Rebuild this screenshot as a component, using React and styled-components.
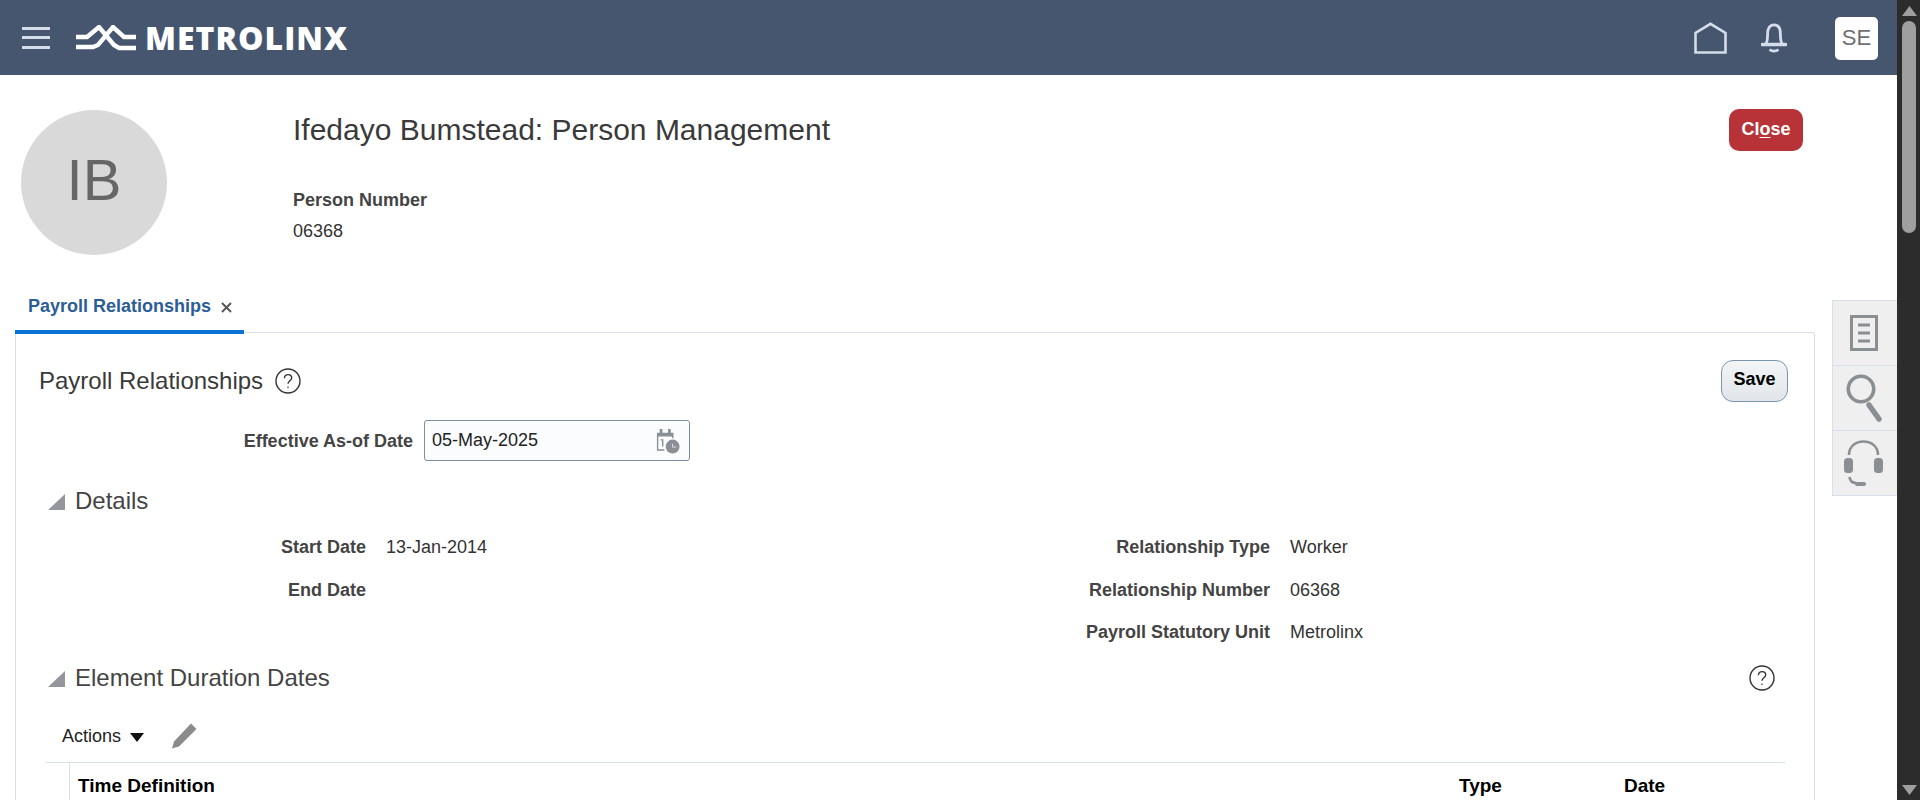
import React from "react";
import styled, { createGlobalStyle } from "styled-components";

const Global = createGlobalStyle`
  html, body { margin: 0; padding: 0; height: 800px; overflow: hidden; background: #fff; }
  body { font-family: "Liberation Sans", Arial, sans-serif; color: #333; }
  * { box-sizing: border-box; }
`;
const Shell = styled.div`display: flex; width: 1920px; height: 800px; overflow: hidden;`;
const Page = styled.div`width: 1897px; height: 800px; overflow: hidden; display: flex; flex-direction: column;`;
const Scrollbar = styled.div`
  width: 23px; height: 800px; background: #2c2c2c; display: flex; flex-direction: column; align-items: center;
  padding: 6px 0 5px 1px; justify-content: space-between;
`;
const Thumb = styled.div`width: 14px; height: 212px; margin-top: 5px; border-radius: 7px; background: #9f9f9f;`;
const ScrollTop = styled.div`display: flex; flex-direction: column; align-items: center;`;
const Header = styled.header`
  height: 75px; flex: none; background: #46566f; display: flex; align-items: center; padding: 0 19px 0 22px;
`;
const Burger = styled.div`
  width: 28px; height: 22px; display: flex; flex-direction: column; justify-content: space-between; margin-right: 26px;
  & > i { display: block; height: 3px; background: #d4dde9; }
`;
const Wordmark = styled.span`
  font-family: "Open Sans", sans-serif; font-weight: 800; font-size: 32px; letter-spacing: 1px; color: #fff; line-height: 1; margin-left: 9px;
`;
const HeaderRight = styled.div`margin-left: auto; display: flex; align-items: center;`;
const HeaderIcon = styled.svg`display: block; color: #d4dde9; fill: none; stroke: currentColor; margin-right: ${p => p.$mr}px;`;
const UserBadge = styled.div`
  width: 43px; height: 43px; background: #fff; border-radius: 5px; color: #6f6f6f; font-size: 22px; display: flex; align-items: center; justify-content: center; margin-top: 1px;
`;
const Identity = styled.section`height: 208px; flex: none; display: flex; padding: 35px 94px 0 21px;`;
const Avatar = styled.div`
  width: 146px; height: 145px; border-radius: 50%; background: #d9d9d9; color: #666; font-size: 58px; padding-bottom: 6px; display: flex; align-items: center; justify-content: center; flex: none;
`;
const IdentityBody = styled.div`margin-left: 126px; flex: 1;`;
const PageTitle = styled.h1`margin: 0; font-weight: 400; font-size: 30px; line-height: 40px; color: #3a3a3a;`;
const PersonLabel = styled.div`font-weight: 700; font-size: 18px; color: #444; margin-top: 40px; line-height: 20px;`;
const PersonValue = styled.div`font-size: 18px; margin-top: 11px; line-height: 20px; color: #333;`;
const CloseButton = styled.button`
  width: 74px; height: 42px; border: 0; border-radius: 10px; background: #b83338; color: #fff; font: 700 18px "Liberation Sans", sans-serif; margin-top: -1px; padding: 0 0 2px;
  & u { text-underline-offset: 2px; }
`;
const Body = styled.div`flex: 1; display: flex; align-items: flex-start; padding-left: 15px; min-height: 0;`;
const Main = styled.div`width: 1800px; flex: none;`;
const Tabs = styled.div`display: flex; height: 51px;`;
const Tab = styled.div`
  width: 229px; height: 51px; padding-left: 13px; display: flex; align-items: flex-start; padding-top: 13px; color: #2b5e97; font-weight: 700; font-size: 18px; line-height: 20px; border-bottom: 4px solid #0972d3; position: relative; z-index: 1;
`;
const TabClose = styled.svg`margin: 6px 0 0 10px; stroke: #555; stroke-width: 1.9; fill: none;`;
const Card = styled.div`
  margin-top: -2px; height: 480px; border: 1px solid #d6dfea; border-bottom: 0; border-radius: 0 3px 0 0; padding: 26px 26px 0 23px;
`;
const TitleRow = styled.div`display: flex; align-items: center; height: 44px;`;
const CardTitle = styled.h2`margin: 0; font-weight: 400; font-size: 24px; color: #3a3a3a;`;
const Help = styled.svg`display: block; fill: none; stroke: #333; margin-left: ${p => p.$ml || 0}px;`;
const SaveButton = styled.button`
  margin-left: auto; width: 67px; height: 42px; border: 1px solid #7a95ac; border-radius: 12px; background: linear-gradient(#f3f5f7, #e1e5e9); color: #000; font: 700 18px "Liberation Sans", sans-serif; padding: 0 0 3px;
`;
const DateRow = styled.div`display: flex; align-items: center; margin-top: 17px; height: 41px;`;
const FieldLabel = styled.label`font-weight: 700; font-size: 18px; color: #444; text-align: right; width: ${p => p.$w}px; flex: none; line-height: 20px;`;
const DateInput = styled.div`
  margin-left: 11px; width: 266px; height: 41px; border: 1px solid #7b8f9f; border-radius: 3px; background: #fbfcfe; display: flex; align-items: center; justify-content: space-between; padding: 0 9px 0 7px; font-size: 18px; color: #222;
`;
const SectionHead = styled.div`display: flex; align-items: center; height: 30px; margin-top: ${p => p.$mt}px; padding-left: 9px; padding-right: 13px;`;
const Disclosure = styled.i`
  display: block; width: 0; height: 0; border-style: solid; border-width: 0 0 16px 17px; border-color: transparent transparent #93979b transparent; margin-right: 10px; margin-top: 1px;
`;
const SectionTitle = styled.h3`margin: 0; font-weight: 400; font-size: 24px; color: #444;`;
const Spacer = styled.div`flex: 1;`;
const DetailGrid = styled.div`display: flex; margin-top: 10px; height: 128px;`;
const DetailCol = styled.div`display: grid; grid-template-columns: ${p => p.$w}px auto; column-gap: 20px; grid-auto-rows: 42.5px; align-content: start; align-items: center; width: ${p => p.$width}px; flex: none;`;
const DetailValue = styled.div`font-size: 18px; color: #333; line-height: 20px;`;
const Toolbar = styled.div`display: flex; align-items: center; height: 48px; margin-top: 19px; padding-left: 23px;`;
const ActionsLabel = styled.span`font-size: 18px; color: #222;`;
const Caret = styled.i`display: block; width: 0; height: 0; border-style: solid; border-width: 9px 7.5px 0; border-color: #111 transparent transparent; margin: 3px 0 0 9px;`;
const Pencil = styled.svg`display: block; fill: #8b8b8b; margin-left: 27px;`;
const TableHead = styled.div`
  margin-left: 7px; margin-right: 3px; border-top: 1px solid #d6dfea; display: grid; grid-template-columns: 24px 1389px 165px auto; height: 40px; font-weight: 700; font-size: 19px; color: #000; margin-top: 2px; align-items: start;
`;
const Gutter = styled.div`height: 40px; border-right: 1px solid #d6dfea;`;
const HeadCell = styled.div`padding: 12px 0 0 ${p => p.$pl}px; line-height: 22px;`;
const Rail = styled.aside`margin: 17px 0 0 17px; width: 65px; flex: none;`;
const RailTab = styled.div`
  height: 66px; background: #efefef; border: 1px solid #d6dfea; border-right: 0; margin-top: ${p => p.$first ? 0 : -1}px; display: flex; align-items: center; justify-content: center; padding-right: 3px;
`;
const RailSvg = styled.svg`display: block;`;

const HelpIcon = ({ size = 26, ml }) => (
  <Help $ml={ml} width={size} height={size} viewBox="0 0 26 26" strokeWidth="1.4">
    <circle cx="13" cy="13" r="12" />
    <path d="M9.4 10.2c0-2.2 1.6-3.6 3.7-3.6s3.6 1.3 3.6 3.2c0 2.9-3.7 2.9-3.7 6" />
    <circle cx="13" cy="19.2" r=".8" fill="#333" stroke="none" />
  </Help>
);

export default function App() {
  return (
    <Shell>
      <Global />
      <Page>
        <Header>
          <Burger><i /><i /><i /></Burger>
          <svg width="60" height="26" viewBox="0 0 60 26" fill="none" stroke="#fff" strokeWidth="4.4">
            <path d="M0 12h11L23 2l15 18 5 3h17" />
            <path d="M0 22h17l5-2L37 2l11 10h12" />
          </svg>
          <Wordmark>METROLINX</Wordmark>
          <HeaderRight>
            <HeaderIcon $mr={34} width="33" height="32" viewBox="0 0 33 32" strokeWidth="2.6">
              <path d="M1.500 30.500V11L16.500 1.800 31.500 11v19.500z" />
            </HeaderIcon>
            <HeaderIcon $mr={48} width="26" height="30" viewBox="0 0 26 30" strokeWidth="2.8">
              <path d="M5 21c1.500-3 1.600-6 1.600-10C6.600 5 9 1.800 13 1.800S19.400 5 19.400 11c0 4 .1 7 1.600 10" />
              <path d="M1.500 21.500h23" strokeWidth="3.600" strokeLinecap="round" />
              <path d="M8.500 26.500c2.500 2.200 6.500 2.200 9 0" strokeWidth="2.600" />
            </HeaderIcon>
            <UserBadge>SE</UserBadge>
          </HeaderRight>
        </Header>
        <Identity>
          <Avatar>IB</Avatar>
          <IdentityBody>
            <PageTitle>Ifedayo Bumstead: Person Management</PageTitle>
            <PersonLabel>Person Number</PersonLabel>
            <PersonValue>06368</PersonValue>
          </IdentityBody>
          <CloseButton>Cl<u>o</u>se</CloseButton>
        </Identity>
        <Body>
          <Main>
            <Tabs>
              <Tab>
                Payroll Relationships
                <TabClose width="11" height="11" viewBox="0 0 11 11"><path d="M1 1l9 9M10 1l-9 9" /></TabClose>
              </Tab>
            </Tabs>
            <Card>
              <TitleRow>
                <CardTitle>Payroll Relationships</CardTitle>
                <HelpIcon ml={12} />
                <SaveButton>Save</SaveButton>
              </TitleRow>
              <DateRow>
                <FieldLabel $w={374}>Effective As-of Date</FieldLabel>
                <DateInput>
                  05-May-2025
                  <svg width="24" height="26" viewBox="0 0 26 28" fill="#8a8f94">
                    <path d="M1 5h3V1h3v4h6V1h3v4h3v6h-1.500V9H2.500v14H9v1.500H1z" />
                    <path d="M5 12h3v8H6.500v-6.500H5z" />
                    <circle cx="18" cy="20" r="7.500" />
                    <path d="M18 17v3.500h4" stroke="#d8dbde" strokeWidth="1.200" fill="none" />
                  </svg>
                </DateInput>
              </DateRow>
              <SectionHead $mt={25}>
                <Disclosure />
                <SectionTitle>Details</SectionTitle>
              </SectionHead>
              <DetailGrid>
                <DetailCol $w={327} $width={911}>
                  <FieldLabel $w={327}>Start Date</FieldLabel><DetailValue>13-Jan-2014</DetailValue>
                  <FieldLabel $w={327}>End Date</FieldLabel><DetailValue />
                </DetailCol>
                <DetailCol $w={320} $width={600}>
                  <FieldLabel $w={320}>Relationship Type</FieldLabel><DetailValue>Worker</DetailValue>
                  <FieldLabel $w={320}>Relationship Number</FieldLabel><DetailValue>06368</DetailValue>
                  <FieldLabel $w={320}>Payroll Statutory Unit</FieldLabel><DetailValue>Metrolinx</DetailValue>
                </DetailCol>
              </DetailGrid>
              <SectionHead $mt={9}>
                <Disclosure />
                <SectionTitle>Element Duration Dates</SectionTitle>
                <Spacer />
                <HelpIcon />
              </SectionHead>
              <Toolbar>
                <ActionsLabel>Actions</ActionsLabel>
                <Caret />
                <Pencil width="26" height="26" viewBox="0 0 26 26">
                  <path d="M20 .5l5.500 5.500L8 23.500l-7 2 2-7z" />
                </Pencil>
              </Toolbar>
              <TableHead>
                <Gutter />
                <HeadCell $pl={8}>Time Definition</HeadCell>
                <HeadCell $pl={0}>Type</HeadCell>
                <HeadCell $pl={0}>Date</HeadCell>
              </TableHead>
            </Card>
          </Main>
          <Rail>
            <RailTab $first>
              <RailSvg width="28" height="36" viewBox="0 0 28 36" fill="none" stroke="#8a8f94" strokeWidth="3">
                <rect x="1.500" y="1.500" width="25" height="33" />
                <path d="M8 10h12M8 18h12M8 26h12" />
              </RailSvg>
            </RailTab>
            <RailTab>
              <RailSvg width="36" height="48" viewBox="0 0 36 48" fill="none" stroke="#8a8f94">
                <circle cx="15" cy="15" r="12.700" strokeWidth="3.600" />
                <path d="M23 31l10 14" strokeWidth="5.500" strokeLinecap="round" />
              </RailSvg>
            </RailTab>
            <RailTab>
              <RailSvg width="40" height="47" viewBox="0 0 40 47" fill="none" stroke="#8a8f94">
                <path d="M5 15C5 6 12 1.500 19.500 1.500S34 6 34 15" strokeWidth="2.600" />
                <rect x="0" y="18" width="9" height="15" rx="3.500" fill="#8a8f94" stroke="none" />
                <rect x="30" y="18" width="9" height="15" rx="3.500" fill="#8a8f94" stroke="none" />
                <path d="M5.500 37c.5 4 3 6 7 6" strokeWidth="2.600" />
                <rect x="11" y="42" width="11" height="4" rx="2" fill="#8a8f94" stroke="none" />
              </RailSvg>
            </RailTab>
          </Rail>
        </Body>
      </Page>
      <Scrollbar>
        <ScrollTop>
          <svg width="15" height="10" viewBox="0 0 15 10"><path d="M7.500 0L15 10H0z" fill="#9f9f9f" /></svg>
          <Thumb />
        </ScrollTop>
        <svg width="15" height="10" viewBox="0 0 15 10"><path d="M7.500 10L15 0H0z" fill="#9f9f9f" /></svg>
      </Scrollbar>
    </Shell>
  );
}
